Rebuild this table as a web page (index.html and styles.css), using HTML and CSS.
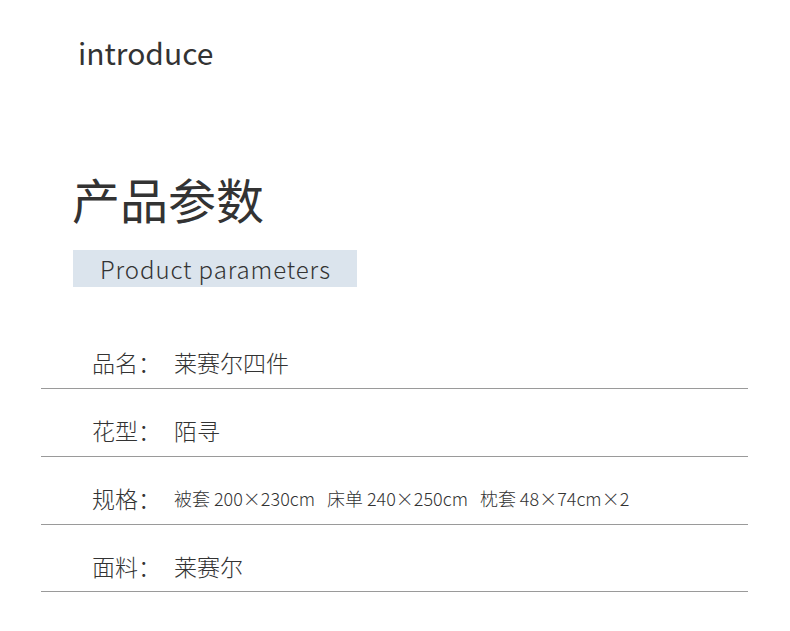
FILE: index.html
```html
<!DOCTYPE html>
<html lang="zh">
<head>
<meta charset="utf-8">
<link rel="stylesheet" href="styles.css">
</head>
<body>
<div class="page">
  <div class="intro">introduce</div>
  <h1 class="title">产品参数</h1>
  <div class="tag">Product parameters</div>
  <div class="params">
    <div class="row"><span class="label">品名：</span><span class="value">莱赛尔四件</span></div>
    <div class="row"><span class="label">花型：</span><span class="value">陌寻</span></div>
    <div class="row"><span class="label">规格：</span><span class="value small">被套 200×230cm&nbsp;&nbsp; 床单 240×250cm&nbsp;&nbsp; 枕套 48×74cm×2</span></div>
    <div class="row last"><span class="label">面料：</span><span class="value">莱赛尔</span></div>
  </div>
</div>
</body>
</html>
```
FILE: styles.css
```css
html, body {
  margin: 0;
  padding: 0;
  background: #fff;
}
body {
  font-family: "Noto Sans CJK SC", "Noto Sans", sans-serif;
  color: #333;
}
.page {
  width: 790px;
  height: 631px;
  overflow: hidden;
}
.intro {
  margin: 32px 0 0 78px;
  font-size: 30px;
  line-height: 40px;
  font-weight: 400;
  color: #333;
}
.title {
  margin: 96px 0 0 72px;
  font-size: 48px;
  line-height: 60px;
  font-weight: 400;
  color: #333;
}
.tag {
  margin: 22px 0 0 73px;
  width: 284px;
  height: 37px;
  box-sizing: border-box;
  padding-left: 27px;
  background: #dbe4ed;
  font-size: 24px;
  line-height: 37px;
  font-weight: 300;
  letter-spacing: 0.9px;
  color: #333;
}
.params {
  margin: 34px 0 0 41px;
  width: 707px;
}
.row {
  display: flex;
  align-items: center;
  height: 67px;
  box-sizing: content-box;
  border-bottom: 1px solid #9a9a9a;
  padding: 0;
}
.row.last {
  height: 66px;
}
.row > span {
  padding-top: 15px;
  line-height: 30px;
}
.label {
  width: 82px;
  margin-left: 51px;
  font-size: 23px;
  font-weight: 300;
  color: #333;
}
.value {
  font-size: 23px;
  font-weight: 300;
  color: #333;
}
.value.small {
  font-size: 18px;
}
```
